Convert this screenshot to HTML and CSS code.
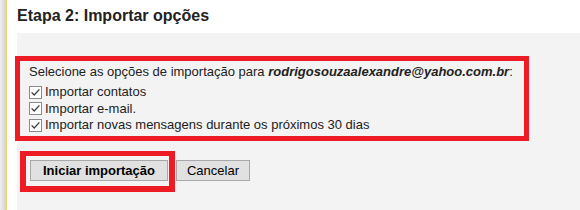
FILE: index.html
```html
<!DOCTYPE html>
<html>

<head>
    <meta charset="UTF-8">
    <title>Importar e-mail e contatos</title>
    <link rel="stylesheet" href="styles.css">
</head>

<body>
    <div class="page">
        <div class="side-strip"></div>

        <div class="main">
            <h2 class="step-title">Etapa 2: Importar opções</h2>

            <div class="panel">
                <div class="options highlight">
                    <p class="options-intro">
                        Selecione as opções de importação para <b><i>rodrigosouzaalexandre@yahoo.com.br</i></b>:
                    </p>
                    <label class="option">
                        <span class="check">
                            <svg width="13" height="13" viewBox="0 0 13 13">
                                <rect x="0.5" y="0.5" width="12" height="12" fill="#fdfdfd" stroke="#8a8a8a" />
                                <path d="M2.6 6.4 L5.2 9 L10.4 3.4" fill="none" stroke="#3c3c3c" stroke-width="1.3" />
                            </svg>
                        </span>
                        Importar contatos
                    </label>
                    <label class="option">
                        <span class="check">
                            <svg width="13" height="13" viewBox="0 0 13 13">
                                <rect x="0.5" y="0.5" width="12" height="12" fill="#fdfdfd" stroke="#8a8a8a" />
                                <path d="M2.6 6.4 L5.2 9 L10.4 3.4" fill="none" stroke="#3c3c3c" stroke-width="1.3" />
                            </svg>
                        </span>
                        Importar e-mail.
                    </label>
                    <label class="option">
                        <span class="check">
                            <svg width="13" height="13" viewBox="0 0 13 13">
                                <rect x="0.5" y="0.5" width="12" height="12" fill="#fdfdfd" stroke="#8a8a8a" />
                                <path d="M2.6 6.4 L5.2 9 L10.4 3.4" fill="none" stroke="#3c3c3c" stroke-width="1.3" />
                            </svg>
                        </span>
                        Importar novas mensagens durante os próximos 30 dias
                    </label>
                </div>

                <div class="actions">
                    <div class="start-wrap highlight">
                        <button class="btn btn-primary">Iniciar importação</button>
                    </div>
                    <button class="btn">Cancelar</button>
                </div>
            </div>
        </div>
    </div>
</body>

</html>
```

FILE: styles.css
```css
body {
    margin: 0;
    padding: 0;
    font-family: 'Liberation Sans', Arial, sans-serif;
    color: #222;
    background: #fff;
}

.page {
    display: flex;
    height: 210px;
    overflow: hidden;
}

.side-strip {
    width: 17px;
    flex-shrink: 0;
    background: linear-gradient(to right, #eeeeee 0, #d2d2d2 6px, #f1d46a 6px, #f1d46a 7px, #ffffff 7px);
}

.main {
    flex: 1;
    display: flex;
    flex-direction: column;
}

.step-title {
    font-size: 16px;
    font-weight: bold;
    line-height: 20px;
    margin: 0;
    padding-top: 6px;
    margin-bottom: 7px;
}

.panel {
    flex: 1;
    background: #f3f3f3;
    padding-top: 23px;
}

.highlight {
    border: 5px solid #ed1c24;
}

.options {
    width: 495px;
    margin-left: -2px;
    padding: 3px 0 2.5px 9px;
    font-size: 13px;
}

.options-intro {
    margin: 0 0 4px;
    line-height: 16px;
}

.option {
    display: flex;
    align-items: center;
    line-height: 16.5px;
}

.check {
    display: flex;
    margin-right: 3px;
}

.actions {
    display: flex;
    align-items: flex-start;
    margin-top: 10px;
    margin-left: 3px;
}

.start-wrap {
    border-width: 5px 6px 6px 6px;
    padding: 4px 1px 5px 4px;
    display: flex;
}

.btn {
    height: 21px;
    padding: 0 10px;
    border: 1px solid #a8a8a8;
    background: #e1e1e1;
    font-family: 'Liberation Sans', Arial, sans-serif;
    font-size: 13px;
    color: #000;
    margin-top: 9px;
    margin-left: 1px;
}

.btn-primary {
    font-weight: bold;
    padding: 0 12px;
    margin: 0;
}
```
